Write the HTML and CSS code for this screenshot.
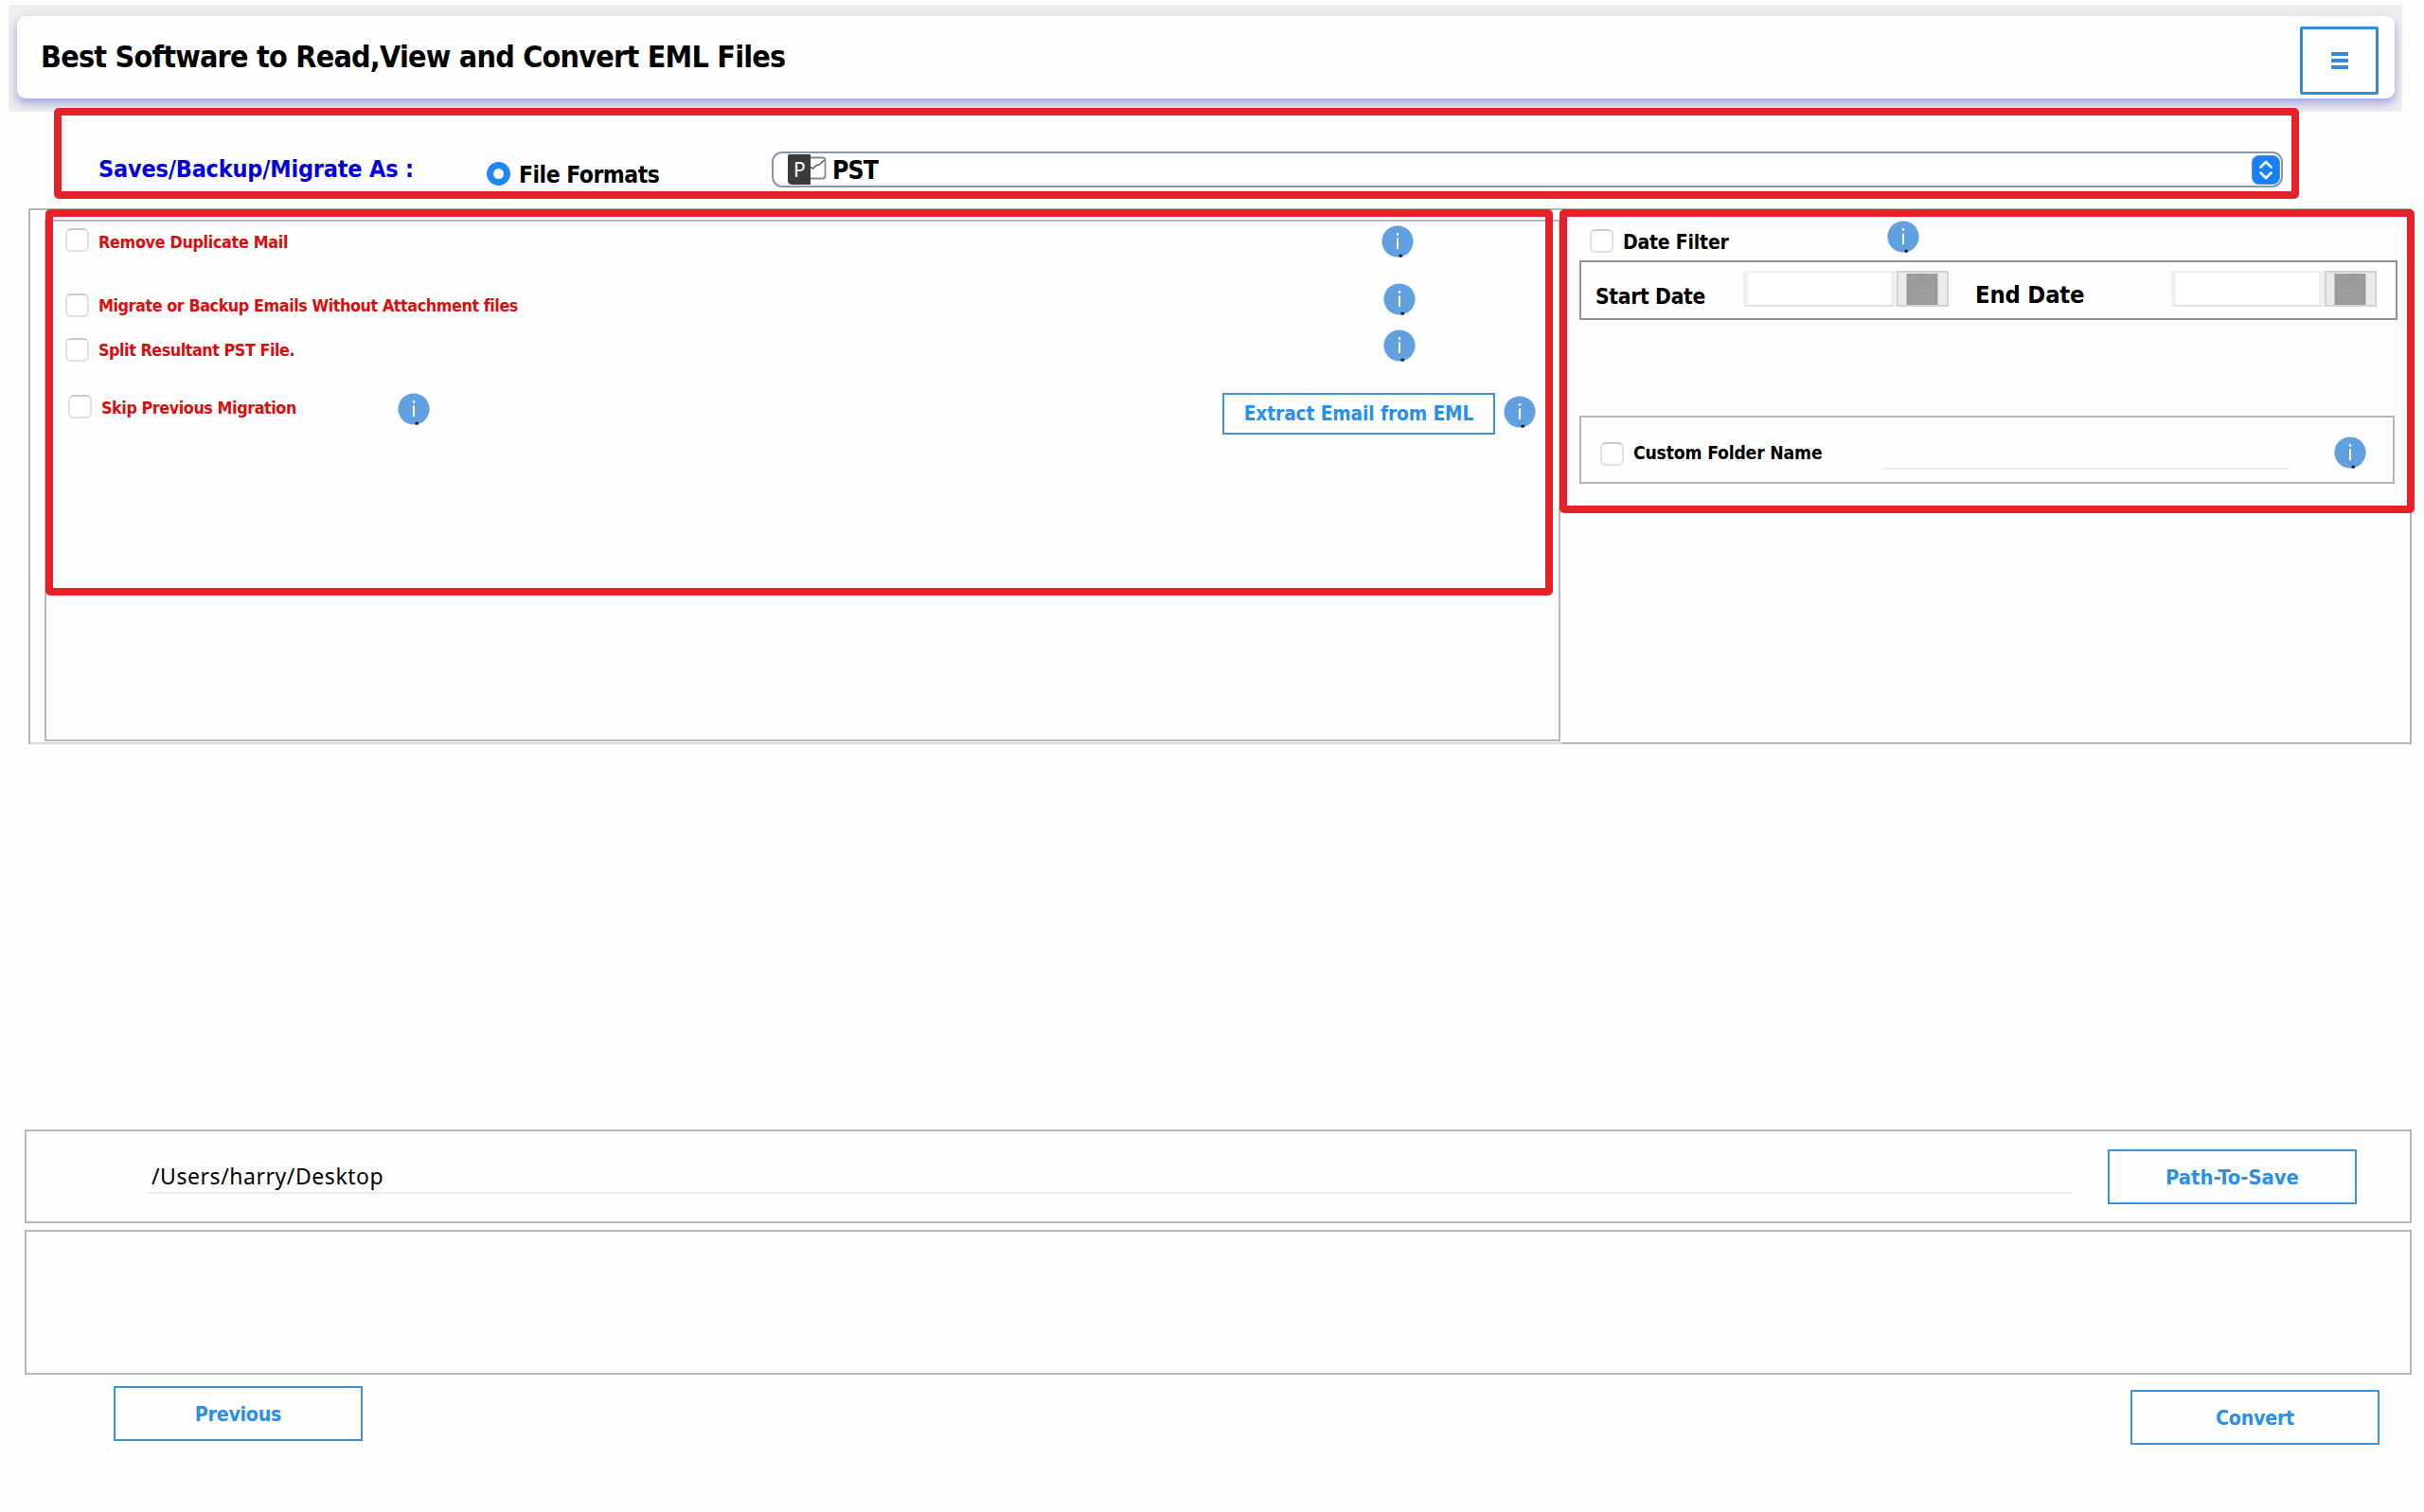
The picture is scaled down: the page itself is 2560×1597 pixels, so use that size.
FILE: index.html
```html
<!DOCTYPE html>
<html lang="en">
<head>
<meta charset="utf-8">
<title>EML Converter</title>
<link rel="stylesheet" href="styles.css">
</head>
<body>
<svg class="defs" aria-hidden="true">
  <symbol id="info" viewBox="0 0 34 34">
    <circle cx="17" cy="17" r="16.6" fill="#62a1e0"/>
    <circle cx="17" cy="9.4" r="1.3" fill="#fff"/>
    <path d="M17 13.5V25" stroke="#fff" stroke-width="2"/>
    <path d="M18.5 30.8h3.4v2.8h-3.4z" fill="#0b1a2c"/>
  </symbol>
  <symbol id="calendar" viewBox="0 0 34 34">
    <path d="M0 0h34v34H0z" fill="#9b9b9b"/>
    <path d="M5 14h24v14H5zM5 18.7h24M5 23.3h24M9 14v14M13 14v14M17 14v14M21 14v14M25 14v14M5 5h7M22 5h9" fill="none" stroke="#a3a3a3" stroke-width="1"/>
  </symbol>
</svg>

<header class="header">
  <div class="title-card">
    <h1 class="title">Best Software to Read,View and Convert EML Files</h1>
    <button class="menu" aria-label="Menu"><span></span><span></span><span></span></button>
  </div>
</header>

<section class="formats">
  <div class="formats-label">Saves/Backup/Migrate As :</div>
  <div class="radio"></div>
  <div class="radio-label">File Formats</div>
  <div class="combo">
    <svg class="pst-icon" viewBox="0 0 42 34">
      <path d="M22 4.5h15.500q3 0 3 3v16q0 3-3 3H22" fill="#fff" stroke="#8a8a8a" stroke-width="1.800"/>
      <path d="M24 14l3.500 2 4-3.500 2.500-.5 6-5" fill="none" stroke="#5a5a5a" stroke-width="1.500"/>
      <path d="M3 1h22v32H5q-4-1-4-4V3q0-2 2-2z" fill="#3b3b3b"/>
      <text x="7" y="24.500">P</text>
    </svg>
    <span class="combo-value">PST</span>
    <svg class="combo-arrows" viewBox="0 0 30 31">
      <rect x=".5" y=".5" width="29" height="30" rx="7" fill="#1680fa" stroke="#5b8fc4"/>
      <path d="M9.500 12.500L15 7l5.500 5.500M9.500 18.500L15 24l5.500-5.500" fill="none" stroke="#fff" stroke-width="2.600" stroke-linecap="round" stroke-linejoin="round"/>
    </svg>
  </div>
</section>

<main class="panel">
  <div class="panel-left">
    <div class="options">
      <div class="row row-duplicate">
        <span class="check"></span><span class="option-label">Remove Duplicate Mail</span>
        <svg class="info"><use href="#info"/></svg>
      </div>
      <div class="row row-attachment">
        <span class="check"></span><span class="option-label">Migrate or Backup Emails Without Attachment files</span>
        <svg class="info"><use href="#info"/></svg>
      </div>
      <div class="row row-split">
        <span class="check"></span><span class="option-label">Split Resultant PST File.</span>
        <svg class="info"><use href="#info"/></svg>
      </div>
      <div class="row row-skip">
        <span class="check"></span><span class="option-label">Skip Previous Migration</span>
        <svg class="info"><use href="#info"/></svg>
        <button class="button extract">Extract Email from EML</button>
        <svg class="info info-extract"><use href="#info"/></svg>
      </div>
    </div>
  </div>
  <div class="panel-right">
    <div class="date-toggle">
      <span class="check"></span><span class="date-label">Date Filter</span>
      <svg class="info"><use href="#info"/></svg>
    </div>
    <div class="date-range">
      <span class="start-label">Start Date</span>
      <div class="picker"><span class="picker-field"></span><span class="picker-button"><svg><use href="#calendar"/></svg></span></div>
      <span class="end-label">End Date</span>
      <div class="picker picker-end"><span class="picker-field"></span><span class="picker-button"><svg><use href="#calendar"/></svg></span></div>
    </div>
    <div class="folder">
      <span class="check"></span><span class="folder-label">Custom Folder Name</span>
      <span class="folder-field"></span>
      <svg class="info"><use href="#info"/></svg>
    </div>
  </div>
</main>

<section class="path-panel">
  <div class="path-field">/Users/harry/Desktop</div>
  <button class="button path-button">Path-To-Save</button>
</section>
<section class="progress-panel"></section>
<footer class="actions">
  <button class="button">Previous</button>
  <button class="button convert">Convert</button>
</footer>

<div class="highlight highlight-format"></div>
<div class="highlight highlight-options"></div>
<div class="highlight highlight-filters"></div>
</body>
</html>
```
FILE: styles.css
```css
* { box-sizing: border-box; }

body {
  position: relative;
  display: flex;
  flex-direction: column;
  width: 2560px;
  height: 1597px;
  margin: 0;
  overflow: hidden;
  background: #fefefe;
  color: #000;
  font-family: "DejaVu Sans Condensed", "DejaVu Sans", sans-serif;
  font-stretch: condensed;
  font-weight: bold;
  line-height: 1;
  white-space: nowrap;
}

svg { display: block; flex: none; }
.defs { position: absolute; width: 0; height: 0; }

/* Header */
.header {
  flex: none;
  height: 113px;
  margin: 5px 23px 0 9px;
  padding: 12px 8px 14px 9px;
  background: #eee;
  overflow: hidden;
}
.title-card {
  display: flex;
  align-items: flex-start;
  justify-content: space-between;
  height: 87px;
  padding: 11px 17px 0 25px;
  border-radius: 9px;
  background: #fefefe;
  box-shadow: 0 5px 10px 1px #aaaae6;
}
.title {
  margin: 17px 0 0;
  font-size: 32px;
  line-height: 31px;
  letter-spacing: -0.78px;
}
.menu {
  display: flex;
  flex-direction: column;
  align-items: center;
  justify-content: center;
  gap: 3px;
  width: 83px;
  height: 72px;
  padding: 0;
  border: 3px solid #338cdb;
  border-radius: 2px;
  background: #fefefe;
}
.menu span { width: 18px; height: 4px; background: #338cdb; }

/* Export format */
.formats {
  display: flex;
  flex: none;
  align-items: flex-start;
  height: 102px;
  padding-left: 104px;
}
.formats-label {
  width: 410px;
  margin-top: 48px;
  color: #0202dc;
  font-size: 25px;
  letter-spacing: -0.2px;
}
.radio {
  width: 25px;
  height: 25px;
  margin-top: 53px;
  border: 7px solid #1e87f5;
  border-radius: 50%;
  background: #fff;
}
.radio-label { width: 267px; margin: 55px 0 0 9px; font-size: 24.5px; letter-spacing: -0.5px; }
.combo {
  display: flex;
  align-items: center;
  width: 1596px;
  height: 38px;
  margin-top: 42px;
  padding: 0 1px 0 14px;
  border: 2px solid #8998a8;
  border-radius: 11px;
  background: #fff;
}
.pst-icon { width: 42px; height: 34px; }
.pst-icon text { fill: #fff; font: 21px "Noto Sans", sans-serif; }
.combo-value { flex: 1; margin: 2px 0 0 6px; font-size: 26.5px; letter-spacing: -0.9px; }
.combo-arrows { width: 30px; height: 31px; }

/* Option panels */
.panel {
  display: flex;
  flex: none;
  width: 2517px;
  height: 566px;
  margin-left: 30px;
  border: 2px solid #b5b5b5;
  border-bottom: 0;
}
.panel-left {
  width: 1618px;
  padding: 10px 2px 3px 15px;
  border-bottom: 2px solid #d8d8d8;
}
.options { height: 551px; border: 2px solid #b8b8b8; }
.panel-right { flex: 1; padding: 11px 0 0 18px; border-bottom: 2px solid #b5b5b5; }

.check {
  flex: none;
  width: 25px;
  height: 25px;
  border: 2px solid #e0e0e0;
  border-top-color: #c9c9c9;
  border-radius: 6px;
  background: #fff;
}
.info { width: 34px; height: 34px; }
.row { display: flex; align-items: flex-start; padding-left: 20px; }
.option-label {
  margin-left: 10px;
  color: #dc0c0c;
  font-size: 17.8px;
  line-height: 18px;
  letter-spacing: -0.42px;
}
.row .info { margin-left: auto; }
.row-duplicate { height: 65px; padding-top: 7px; padding-right: 153px; }
.row-duplicate .option-label { margin-top: 6px; letter-spacing: -0.32px; }
.row-duplicate .info { margin-top: -3px; }
.row-attachment { height: 48px; padding-right: 151px; }
.row-attachment .check { margin-top: 11px; }
.row-attachment .option-label { margin-top: 15px; }
.row-split { height: 67px; padding-right: 151px; }
.row-split .check { margin-top: 10px; }
.row-split .option-label { margin-top: 14px; letter-spacing: -0.45px; }
.row-split .info { margin-top: 1px; }
.row-skip { padding: 0 24px 0 23px; }
.row-skip .check { margin-top: 3px; }
.row-skip .option-label { width: 313px; margin-top: 8px; }
.row-skip .info { margin: 1px 0 0; }
.row-skip .info-extract { margin: 4px 0 0 9px; }

.button {
  width: 263px;
  height: 58px;
  padding: 2px 0 0;
  border: 2px solid #3b93da;
  background: #fefefe;
  color: #2b8fe8;
  font: inherit;
  font-size: 21.3px;
  letter-spacing: -0.3px;
}
.button.extract {
  width: 288px;
  height: 44px;
  margin: 1px 0 0 auto;
  padding-top: 1px;
  font-size: 20.7px;
  letter-spacing: -0.1px;
}
.path-button.button { margin-top: 1px; font-size: 21.8px; letter-spacing: 0; }

/* Filters */
.date-toggle { display: flex; align-items: flex-start; height: 42px; padding-left: 11px; }
.date-toggle .check { margin-top: 9px; }
.date-label { width: 279px; margin: 13px 0 0 10px; font-size: 21px; letter-spacing: -0.2px; }
.date-range {
  display: flex;
  align-items: flex-start;
  width: 864px;
  height: 63px;
  padding: 9px 20px 0 15px;
  border: 2px solid #8f8f8f;
}
.start-label { margin-top: 16px; font-size: 22.6px; letter-spacing: -0.3px; width: 156px; }
.end-label { margin: 13px 0 0 28px; font-size: 25.4px; letter-spacing: -0.2px; }
.picker { display: flex; width: 217px; height: 38px; }
.picker-end { margin-left: auto; }
.picker-field {
  flex: 1;
  border: solid #efefef;
  border-width: 2px 6px 2px 5px;
  border-bottom-color: #e2e2e2;
  background: #fff;
}
.picker-button {
  width: 55px;
  padding: 1px 0 0 8px;
  border: 2px solid #d3d3d3;
  background: #ebebeb;
}
.picker-button svg { width: 34px; height: 33px; }
.folder {
  display: flex;
  align-items: flex-start;
  width: 861px;
  height: 72px;
  margin-top: 101px;
  padding: 20px 28px 0 20px;
  border: 2px solid #b5b5b5;
}
.folder .check { margin-top: 6px; }
.folder-label { width: 262px; margin: 8px 0 0 10px; font-size: 19.2px; letter-spacing: -0.17px; }
.folder-field { width: 430px; height: 35px; border-bottom: 2px solid #ececec; }
.folder .info { margin-left: auto; }

/* Destination */
.path-panel {
  display: flex;
  flex: none;
  align-items: flex-start;
  justify-content: space-between;
  width: 2521px;
  height: 99px;
  margin: 407px 0 0 26px;
  padding: 18px 56px 0 128px;
  border: 2px solid #b8b8b8;
}
.path-field {
  width: 2033px;
  height: 48px;
  padding: 14px 0 0 4px;
  border-bottom: 2px solid #ececec;
  font: 23px/30px "Noto Sans", sans-serif;
  letter-spacing: 0.55px;
}
.progress-panel {
  flex: none;
  width: 2521px;
  height: 153px;
  margin: 7px 0 0 26px;
  border: 2px solid #b8b8b8;
}
.actions {
  display: flex;
  justify-content: space-between;
  width: 2393px;
  margin: 12px 0 0 120px;
}
.actions .convert { margin-top: 4px; }

/* Red call-out frames drawn over the form */
.highlight { position: absolute; border: 8px solid #e62129; border-radius: 5px; }
.highlight-format { left: 57px; top: 114px; width: 2371px; height: 96px; }
.highlight-options { left: 48px; top: 221px; width: 1592px; height: 408px; }
.highlight-filters { left: 1647px; top: 221px; width: 903px; height: 321px; }
```
